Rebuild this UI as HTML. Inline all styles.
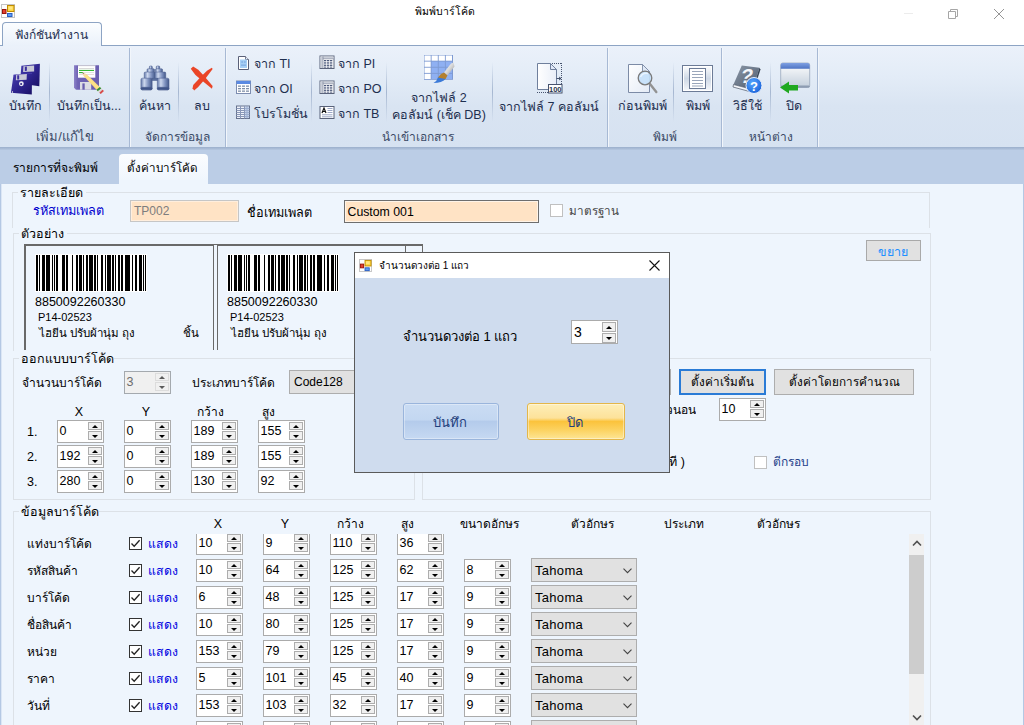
<!DOCTYPE html>
<html><head><meta charset="utf-8"><title>พิมพ์บาร์โค้ด</title>
<style>
html,body{margin:0;padding:0}
body{width:1024px;height:725px;position:relative;overflow:hidden;background:#fff;font-family:"Liberation Sans",sans-serif;font-size:12px;color:#000}
.t{position:absolute;white-space:nowrap;line-height:20px;height:20px}
.abs{position:absolute}
.sp{position:absolute;width:47px;height:23px;box-sizing:border-box;border:1px solid #ababab;background:#fff}
.sp span{position:absolute;left:1.5px;top:0;line-height:21px;font-size:12.5px}
.sp i{position:absolute;left:30px;width:14px;box-sizing:border-box;border:1px solid #adadad;background:#f0f0f0}
.sp i.u{top:1px;height:8px}
.sp i.d{top:10px;height:9px}
.sp i.u:after{content:"";position:absolute;left:3px;top:1.5px;border:3px solid transparent;border-top:0;border-bottom:3px solid #000}
.sp i.d:after{content:"";position:absolute;left:3px;top:2.5px;border:3px solid transparent;border-bottom:0;border-top:3px solid #000}
.sp.big{height:24px}.sp.big span{font-size:14px;line-height:22px;left:2px}.sp.big i.u{top:1px;height:10px}.sp.big i.d{top:12px;height:10px}.sp.big i.u:after{top:2.5px}.sp.big i.d:after{top:3px}
.sp.dis{background:#f0f0f0;border-color:#a4a9ae}
.sp.dis span{color:#6d6d6d}
.sp.dis i{border-color:#dcdcdc;background:#f0f0f0}
.sp.dis i.u:after{border-bottom-color:#5a5a5a}
.sp.dis i.d:after{border-top-color:#5a5a5a}
.cb{position:absolute;width:13px;height:13px;box-sizing:border-box;border:1px solid #333;background:#fff}
.cb svg{position:absolute;left:0;top:0}
.combo{position:absolute;box-sizing:border-box;border:1px solid #adadad;background:#e1e1e1;font-size:13px}
.combo span{position:absolute;left:3px;top:0;letter-spacing:.3px}
.combo .chev{position:absolute;right:4px;top:50%;margin-top:-2.5px}
.gb{position:absolute;box-sizing:border-box;border:1px solid #dce1e7}
.gl{background:#eef5fd;font-size:12.5px;height:14px;line-height:14px;padding-left:2px}
.btn{position:absolute;box-sizing:border-box;border:1px solid #adadad;background:#e1e1e1;text-align:center;font-size:12px}
.vsep{position:absolute;width:1px;top:62px;height:60px;background:linear-gradient(to bottom,rgba(160,178,205,0),rgba(160,178,205,.9) 50%,rgba(160,178,205,0))}
.gsep{position:absolute;width:2px;top:48px;height:99px;background:linear-gradient(to right,#a7b9d4 50%,#f2f6fb 50%)}
.rl{color:#3b4a66}
</style></head><body>

<div class="abs" style="left:0;top:0;width:1024px;height:45px;background:#fff"></div>
<svg class="abs" style="left:1px;top:4px" width="14" height="14" viewBox="0 0 14 14">
<rect x="0.5" y="0.5" width="13" height="13" fill="#fdfdfd" stroke="#c4c4c4"/>
<rect x="6.500" y="1.500" width="6.500" height="6" fill="#ffd742" stroke="#c08c00" stroke-width="1"/>
<rect x="7.500" y="2.500" width="4" height="3" fill="#ffe680"/>
<rect x="1.500" y="5.500" width="3.500" height="4" fill="#e2402e" stroke="#9a1408" stroke-width="1"/>
<rect x="6.500" y="9.500" width="4.500" height="3" fill="#5c9cf2" stroke="#2a5fc4" stroke-width="1"/>
</svg>
<span class="t " style="left:345px;top:0.5px;font-size:10.5px;color:#000;width:200px;text-align:center;">พิมพ์บาร์โค้ด</span>
<svg class="abs" style="left:900px;top:4px" width="124" height="20" viewBox="0 0 124 20">
<path d="M4 9.5 H13" stroke="#ececec" stroke-width="1"/>
<path d="M48.5 7.5 H55.500 V14.500 H48.5 Z M50.5 7.5 V5.5 H57.5 V12.5 H55.5" fill="none" stroke="#a6a6a6" stroke-width="1"/>
<path d="M94 5 L104 15 M104 5 L94 15" stroke="#959595" stroke-width="1"/>
</svg>
<div class="abs" style="left:0;top:45px;width:1024px;height:103px;background:linear-gradient(to bottom,#ebf1fa 0%,#e3ecf7 30%,#d9e4f2 60%,#d6e2f1 100%);border-top:1px solid #8da4c4;border-bottom:1px solid #9fb3cf;box-sizing:border-box"></div>
<div class="abs" style="left:2px;top:22px;width:100px;height:24px;box-sizing:border-box;border:1px solid #8da4c4;border-bottom:0;border-radius:4px 4px 0 0;background:linear-gradient(to bottom,#fbfdff,#eaf1fa)"></div>
<span class="t " style="left:-48.5px;top:24.5px;font-size:12px;color:#1e2f4f;width:200px;text-align:center;">ฟังก์ชันทำงาน</span>
<div class="gsep" style="left:129px"></div>
<div class="gsep" style="left:225px"></div>
<div class="gsep" style="left:607px"></div>
<div class="gsep" style="left:721px"></div>
<div class="gsep" style="left:817px"></div>
<div class="vsep" style="left:49px"></div>
<div class="vsep" style="left:178px"></div>
<div class="vsep" style="left:311px"></div>
<div class="vsep" style="left:386px"></div>
<div class="vsep" style="left:492px"></div>
<div class="vsep" style="left:673px"></div>
<div class="vsep" style="left:770px"></div>
<span class="t " style="left:-35px;top:126.69999999999999px;font-size:13px;color:#3b4a66;width:200px;text-align:center;">เพิ่ม/แก้ไข</span>
<span class="t " style="left:77px;top:126.69999999999999px;font-size:12px;color:#3b4a66;width:200px;text-align:center;">จัดการข้อมูล</span>
<span class="t " style="left:318px;top:126.69999999999999px;font-size:12px;color:#3b4a66;width:200px;text-align:center;">นำเข้าเอกสาร</span>
<span class="t " style="left:565px;top:126.69999999999999px;font-size:12px;color:#3b4a66;width:200px;text-align:center;">พิมพ์</span>
<span class="t " style="left:671px;top:126.69999999999999px;font-size:12px;color:#3b4a66;width:200px;text-align:center;">หน้าต่าง</span>
<span class="t " style="left:-75px;top:95.7px;font-size:12.5px;color:#1e2f4f;width:200px;text-align:center;">บันทึก</span>
<span class="t " style="left:-11px;top:95.7px;font-size:12.5px;color:#1e2f4f;width:200px;text-align:center;">บันทึกเป็น...</span>
<span class="t " style="left:55px;top:95.7px;font-size:12.5px;color:#1e2f4f;width:200px;text-align:center;">ค้นหา</span>
<span class="t " style="left:102px;top:95.7px;font-size:12.5px;color:#1e2f4f;width:200px;text-align:center;">ลบ</span>
<span class="t " style="left:339px;top:87.7px;font-size:12.5px;color:#1e2f4f;width:200px;text-align:center;">จากไฟล์ 2</span>
<span class="t " style="left:339px;top:104.7px;font-size:12.5px;color:#1e2f4f;width:200px;text-align:center;">คอลัมน์ (เช็ค DB)</span>
<span class="t " style="left:449px;top:96.7px;font-size:12.5px;color:#1e2f4f;width:200px;text-align:center;">จากไฟล์ 7 คอลัมน์</span>
<span class="t " style="left:542px;top:95.7px;font-size:12.5px;color:#1e2f4f;width:200px;text-align:center;">ก่อนพิมพ์</span>
<span class="t " style="left:598px;top:95.7px;font-size:12.5px;color:#1e2f4f;width:200px;text-align:center;">พิมพ์</span>
<span class="t " style="left:647px;top:95.7px;font-size:12.5px;color:#1e2f4f;width:200px;text-align:center;">วิธีใช้</span>
<span class="t " style="left:694px;top:95.7px;font-size:12.5px;color:#1e2f4f;width:200px;text-align:center;">ปิด</span>
<span class="t " style="left:254px;top:53.7px;font-size:12.5px;color:#1e2f4f;">จาก TI</span>
<span class="t " style="left:254px;top:78.7px;font-size:12.5px;color:#1e2f4f;">จาก OI</span>
<span class="t " style="left:254px;top:103.7px;font-size:12.5px;color:#1e2f4f;">โปรโมชั่น</span>
<span class="t " style="left:338px;top:53.7px;font-size:12.5px;color:#1e2f4f;">จาก PI</span>
<span class="t " style="left:338px;top:78.7px;font-size:12.5px;color:#1e2f4f;">จาก PO</span>
<span class="t " style="left:338px;top:103.7px;font-size:12.5px;color:#1e2f4f;">จาก TB</span>
<svg class="abs" style="left:9px;top:63px" width="32" height="32" viewBox="0 0 32 32">
<defs><linearGradient id="fl1" x1="0" y1="0" x2="1" y2="1"><stop offset="0" stop-color="#4a40b0"/><stop offset=".5" stop-color="#2f2590"/><stop offset="1" stop-color="#1a1166"/></linearGradient></defs>
<polygon points="12.37,2.82 30.90,0.79 30.32,23.37 10.92,20.48" fill="url(#fl1)"/>
<polygon points="14.40,3.22 25.11,2.53 25.11,8.61 14.11,9.01" fill="#c9c9d6"/>
<polygon points="15.85,3.69 17.87,3.57 17.87,7.85 15.85,7.97" fill="#3a2f9e"/>
<polygon points="4.55,11.68 23.08,9.94 22.79,31.60 1.95,29.86" fill="url(#fl1)"/>
<polygon points="4.55,11.68 23.08,9.94 23.08,10.75 4.55,12.49" fill="#5a50c0" opacity=".6"/>
<polygon points="7.16,11.79 17.87,10.92 17.58,16.71 6.87,17.29" fill="#c9c9d6"/>
<polygon points="8.20,12.37 10.17,12.26 10.17,16.42 8.20,16.54" fill="#3a2f9e"/>
<circle cx="12.37" cy="20.77" r="2.4" fill="#e9e9f2"/>
<circle cx="12.14" cy="20.94" r="1" fill="#2a2080"/>
<rect x="3.11" y="28.01" width=".8" height="2" fill="#d0d0e0"/>
</svg>
<svg class="abs" style="left:72px;top:63px" width="32" height="32" viewBox="0 0 32 32">
<defs><linearGradient id="sv1" x1="0" y1="0" x2="1" y2="0"><stop offset="0" stop-color="#8c82c8"/><stop offset=".15" stop-color="#6f63b4"/><stop offset="1" stop-color="#6a5eb0"/></linearGradient>
<linearGradient id="pc1" x1="0" y1="1" x2="1" y2="0"><stop offset="0" stop-color="#e8b030"/><stop offset=".5" stop-color="#fde48a"/><stop offset="1" stop-color="#e0a020"/></linearGradient></defs>
<path d="M2 2.200 H27 V26.700 H4 L2 24.700 Z" fill="url(#sv1)"/>
<rect x="6" y="2.300" width="17.300" height="12.400" fill="#fff"/>
<rect x="6" y="2.300" width="17.300" height=".8" fill="#b9b9c6"/>
<rect x="7" y="5" width="15" height=".7" fill="#c9c9c9"/>
<rect x="7" y="6.900" width="15" height="1" fill="#1fb01f"/>
<rect x="7" y="9.100" width="4" height="1" fill="#1fb01f"/>
<rect x="11" y="9.200" width="11" height=".6" fill="#d0d0d0"/>
<rect x="7" y="11.200" width="15" height=".6" fill="#d8c8c8"/>
<rect x="8" y="19" width="11.200" height="7.700" fill="#dcdce4"/>
<rect x="10.400" y="20.400" width="2.300" height="6.300" fill="#6a5eb0"/>
<polygon points="10.41,9.36 15.16,11.79 29.35,25.40 25.87,28.29 11.69,12.95" fill="url(#pc1)"/>
<polygon points="10.41,9.36 15.16,11.79 11.69,12.95" fill="#f3d9b0"/>
<polygon points="10.41,9.36 11.98,10.17 10.99,10.63" fill="#333"/>
<polygon points="27.90,23.95 29.35,25.40 25.87,28.29 24.43,26.73" fill="#2e8b3e"/>
<polygon points="29.35,25.40 31.95,28.01 28.77,30.90 25.87,28.29" fill="#d9d9d9"/>
<polygon points="30.51,26.73 31.95,28.01 28.77,30.90 27.32,29.63" fill="#d84a4a"/>
</svg>
<svg class="abs" style="left:139px;top:63px" width="32" height="32" viewBox="0 0 32 32">
<defs><linearGradient id="bn" x1="0" y1="0" x2="1" y2="0"><stop offset="0" stop-color="#6379aa"/><stop offset=".3" stop-color="#cdd8ee"/><stop offset=".65" stop-color="#8093c0"/><stop offset="1" stop-color="#435889"/></linearGradient></defs>
<rect x="10.34" y="2.97" width="3.00" height="3.28" rx="1" fill="url(#bn)" stroke="#4a5d8c" stroke-width=".5"/><rect x="17.19" y="2.97" width="3.56" height="3.28" rx="1" fill="url(#bn)" stroke="#4a5d8c" stroke-width=".5"/>
<rect x="8.00" y="5.78" width="7.50" height="3.75" rx="1" fill="url(#bn)" stroke="#4a5d8c" stroke-width=".5"/><rect x="16.44" y="5.78" width="7.12" height="3.75" rx="1" fill="url(#bn)" stroke="#4a5d8c" stroke-width=".5"/>
<rect x="5.19" y="9.06" width="11.06" height="7.03" rx="1" fill="url(#bn)" stroke="#4a5d8c" stroke-width=".5"/><rect x="15.87" y="9.06" width="10.87" height="7.03" rx="1" fill="url(#bn)" stroke="#4a5d8c" stroke-width=".5"/>
<rect x="13.16" y="15.16" width="5.62" height="2.34" rx="0" fill="#5a6f9e" stroke="#4a5d8c" stroke-width=".5"/>
<rect x="1.91" y="15.16" width="11.25" height="11.72" rx="1.5" fill="url(#bn)" stroke="#4a5d8c" stroke-width=".5"/><rect x="18.31" y="15.16" width="11.72" height="11.72" rx="1.5" fill="url(#bn)" stroke="#4a5d8c" stroke-width=".5"/>
<rect x="1.91" y="24.25" width="11.25" height="2.62" rx="1.5" fill="#3f5488" stroke="#4a5d8c" stroke-width=".5"/><rect x="18.31" y="24.25" width="11.72" height="2.62" rx="1.5" fill="#3f5488" stroke="#4a5d8c" stroke-width=".5"/>
</svg>
<svg class="abs" style="left:186px;top:63px" width="32" height="32" viewBox="0 0 32 32">
<polygon points="4.78,5.69 7.12,3.44 12.28,6.81 18.37,13.19 26.62,23.12 25.97,25.66 16.50,17.97 9.47,11.97" fill="#ea4527"/>
<polygon points="25.87,4.75 26.62,6.06 19.69,15.16 12.19,24.06 8.15,27.53 6.56,25.19 7.22,21.91 15.09,13.47 21.00,7.84" fill="#ea4527"/>
</svg>
<svg class="abs" style="left:236px;top:55px" width="16" height="16" viewBox="0 0 16 16">
<path d="M2.500 1.500 H9.500 L12.500 4.500 V14.500 H2.500 Z" fill="#fff" stroke="#5a6078" stroke-width="1"/>
<path d="M9.500 1.500 V4.500 H12.500" fill="#e8eef8" stroke="#5a6078" stroke-width=".8"/>
<rect x="4" y="4.500" width="7" height="8.500" fill="#a6cff5"/>
<rect x="5" y="9.700" width="5" height=".8" fill="#6a9ad8"/>
<path d="M5.300 6 L7 8 M7 6 L5.300 8 M8 6 L9.700 8 M9.700 6 L8 8" stroke="#7aa8e0" stroke-width=".6"/>
</svg>
<svg class="abs" style="left:236px;top:80px" width="16" height="16" viewBox="0 0 16 16">
<rect x="0.500" y="1" width="14" height="12.500" fill="#fff" stroke="#7d8db0" stroke-width="1"/>
<rect x="0.500" y="1" width="14" height="3" fill="#5b8ae2"/>
<g fill="#7f8fa8"><rect x="2" y="5.500" width="3" height="1.300"/><rect x="6" y="5.500" width="3" height="1.300"/><rect x="10" y="5.500" width="3" height="1.300"/>
<rect x="2" y="8" width="3" height="1.300"/><rect x="6" y="8" width="3" height="1.300"/><rect x="10" y="8" width="3" height="1.300"/>
<rect x="2" y="10.500" width="3" height="1.300"/><rect x="6" y="10.500" width="3" height="1.300"/><rect x="10" y="10.500" width="3" height="1.300"/></g>
</svg>
<svg class="abs" style="left:236px;top:105px" width="16" height="16" viewBox="0 0 16 16">
<rect x="0.500" y="1" width="13" height="12.500" fill="#eef2fa" stroke="#66728e" stroke-width="1"/>
<path d="M4.500 1 V13.500 M8.500 1 V13.500 M11 1 V13.500 M0.500 3.500 H13.500 M0.500 5.500 H13.500 M0.500 7.500 H13.500 M0.500 9.500 H13.500 M0.500 11.500 H13.500" stroke="#8a98b8" stroke-width="1"/>
<rect x="9" y="1.500" width="4" height="11.500" fill="#a9bde0" opacity=".6"/>
</svg>
<svg class="abs" style="left:319px;top:55px" width="16" height="16" viewBox="0 0 16 16">
<rect x="1" y="1" width="14" height="12.500" fill="#fff" stroke="#59627a" stroke-width="1"/>
<rect x="1.500" y="1.500" width="13" height="2" fill="#c9ced8"/>
<rect x="1.500" y="1.500" width="2.300" height="11.500" fill="#c9ced8"/>
<path d="M4 3.800 H14.500 M4 1.500 V13.500" stroke="#7a8398" stroke-width=".7"/>
<g fill="#4d5a7c"><rect x="5" y="5" width="2.300" height="1.300"/><rect x="8" y="5" width="2.300" height="1.300"/><rect x="11" y="5" width="2.300" height="1.300"/>
<rect x="5" y="7.300" width="2.300" height="1.300"/><rect x="8" y="7.300" width="2.300" height="1.300"/><rect x="11" y="7.300" width="2.300" height="1.300"/>
<rect x="5" y="9.600" width="2.300" height="1.300"/><rect x="8" y="9.600" width="2.300" height="1.300"/><rect x="11" y="9.600" width="2.300" height="1.300"/>
<rect x="5" y="11.600" width="2.300" height="1"/><rect x="8" y="11.600" width="2.300" height="1"/><rect x="11" y="11.600" width="2.300" height="1"/></g>
</svg>
<svg class="abs" style="left:319px;top:80px" width="16" height="16" viewBox="0 0 16 16">
<rect x="1" y="1" width="14" height="12.500" fill="#fff" stroke="#59627a" stroke-width="1"/>
<rect x="1.500" y="1.500" width="13" height="2" fill="#c9ced8"/>
<rect x="1.500" y="1.500" width="2.300" height="11.500" fill="#c9ced8"/>
<path d="M4 3.800 H14.500 M4 1.500 V13.500" stroke="#7a8398" stroke-width=".7"/>
<g fill="#4d5a7c"><rect x="5" y="5" width="2.300" height="1.300"/><rect x="8" y="5" width="2.300" height="1.300"/><rect x="11" y="5" width="2.300" height="1.300"/>
<rect x="5" y="7.300" width="2.300" height="1.300"/><rect x="8" y="7.300" width="2.300" height="1.300"/><rect x="11" y="7.300" width="2.300" height="1.300"/>
<rect x="5" y="9.600" width="2.300" height="1.300"/><rect x="8" y="9.600" width="2.300" height="1.300"/><rect x="11" y="9.600" width="2.300" height="1.300"/>
<rect x="5" y="11.600" width="2.300" height="1"/><rect x="8" y="11.600" width="2.300" height="1"/><rect x="11" y="11.600" width="2.300" height="1"/></g>
</svg>
<svg class="abs" style="left:319px;top:105px" width="16" height="16" viewBox="0 0 16 16">
<rect x="1" y="1.500" width="14" height="12" fill="#fff" stroke="#59627a" stroke-width="1"/>
<path d="M3 8 L5 3 L7 8 M3.700 6.500 H6.300" fill="none" stroke="#111" stroke-width="1.200"/>
<path d="M8.500 3.500 H13.500 M8.500 5.500 H13.500 M8.500 7.500 H13.500 M3 9.800 H13.500 M3 11.800 H13.500" stroke="#8f9cc0" stroke-width=".9"/>
</svg>
<svg class="abs" style="left:423px;top:53px" width="34" height="32" viewBox="0 0 34 32">
<defs><linearGradient id="bh" x1="0" y1="0" x2="1" y2="1"><stop offset="0" stop-color="#fff"/><stop offset=".5" stop-color="#d8d8d8"/><stop offset="1" stop-color="#8a8a8a"/></linearGradient></defs>
<rect x="1" y="2" width="29" height="24.800" fill="#7d9ad2"/>
<rect x="1.5" y="2.5" width="6.200" height="5.200" fill="#fff"/><rect x="8.6" y="2.5" width="6.200" height="5.200" fill="#fff"/><rect x="15.7" y="2.5" width="6.200" height="5.200" fill="#fff"/><rect x="22.8" y="2.5" width="6.200" height="5.200" fill="#fff"/><rect x="1.5" y="8.6" width="6.200" height="5.200" fill="#fff"/><rect x="8.6" y="8.6" width="6.200" height="5.200" fill="#8fb0f2"/><rect x="15.7" y="8.6" width="6.200" height="5.200" fill="#8fb0f2"/><rect x="22.8" y="8.6" width="6.200" height="5.200" fill="#8fb0f2"/><rect x="1.5" y="14.7" width="6.200" height="5.200" fill="#fff"/><rect x="8.6" y="14.7" width="6.200" height="5.200" fill="#8fb0f2"/><rect x="15.7" y="14.7" width="6.200" height="5.200" fill="#8fb0f2"/><rect x="22.8" y="14.7" width="6.200" height="5.200" fill="#8fb0f2"/><rect x="1.5" y="20.8" width="6.200" height="5.200" fill="#fff"/><rect x="8.6" y="20.8" width="6.200" height="5.200" fill="#8fb0f2"/><rect x="15.7" y="20.8" width="6.200" height="5.200" fill="#8fb0f2"/><rect x="22.8" y="20.8" width="6.200" height="5.200" fill="#8fb0f2"/>
<polygon points="30.500,9.500 31.500,13.500 24.500,22.500 21,19.500 28,10.500" fill="url(#bh)"/>
<polygon points="21,19.500 24.500,22.500 22.500,26 17,28 15,24.500 18,21" fill="#b4802e"/>
<path d="M15 24.500 L22.500 26 Q19 30 10.500 30 Q14 28 15 24.500 Z" fill="#3b7ad8"/>
</svg>
<svg class="abs" style="left:534px;top:61px" width="32" height="34" viewBox="0 0 32 34">
<defs><linearGradient id="pg" x1="0" y1="0" x2="1" y2="0"><stop offset="0" stop-color="#ffffff"/><stop offset="1" stop-color="#e9eef8"/></linearGradient></defs>
<path d="M3.500 2.500 H16.500 L22.500 8.500 V28.500 H3.500 Z" fill="url(#pg)" stroke="#6f7f9c" stroke-width="1"/>
<path d="M16.500 2.500 V8.500 H22.500 Z" fill="#dfe8f8" stroke="#6f7f9c" stroke-width="1"/>
<path d="M18 2.500 H28" stroke="#47536e" stroke-width="1" stroke-dasharray="1 1"/>
<path d="M27.500 2 V23" stroke="#47536e" stroke-width="1" stroke-dasharray="1 1"/>
<path d="M3 31.500 H14" stroke="#47536e" stroke-width="1" stroke-dasharray="1 1"/>
<path d="M22.500 17.500 H27 M25 16 L27 17.500 L25 19" stroke="#47536e" stroke-width="1" fill="none"/>
<rect x="14.500" y="23.500" width="13.500" height="8.500" fill="#fff" stroke="#47536e" stroke-width="1"/>
<text x="21.300" y="30.600" font-family="Liberation Sans" font-weight="bold" font-size="7.500" text-anchor="middle" fill="#2e3850">100</text>
</svg>
<svg class="abs" style="left:626px;top:62px" width="34" height="34" viewBox="0 0 34 34">
<defs><linearGradient id="pv" x1="0" y1="0" x2="1" y2="1"><stop offset="0" stop-color="#ffffff"/><stop offset="1" stop-color="#e4ebf6"/></linearGradient></defs>
<path d="M2.500 2.500 H16.500 L23.500 9.500 V30.500 H2.500 Z" fill="url(#pv)" stroke="#7c8ba6" stroke-width="1"/>
<path d="M16.500 2.500 V9.500 H23.500 Z" fill="#dfe8f6" stroke="#7c8ba6" stroke-width=".9"/>
<path d="M24 22 L30.300 30" stroke="#929292" stroke-width="2.400" stroke-linecap="round"/>
<circle cx="19" cy="16" r="6.800" fill="#c4e0f9" fill-opacity=".9" stroke="#7a7a7a" stroke-width="1.300"/>
<path d="M14.500 15 Q17 10.500 22 11.500" stroke="#eaf5ff" stroke-width="1.500" fill="none"/>
</svg>
<svg class="abs" style="left:681px;top:64px" width="34" height="30" viewBox="0 0 34 30">
<defs><linearGradient id="pr" x1="0" y1="0" x2="0" y2="1"><stop offset="0" stop-color="#ffffff"/><stop offset=".5" stop-color="#cfd9e6"/><stop offset="1" stop-color="#f7f9fc"/></linearGradient></defs>
<rect x="1.500" y="1.500" width="30" height="26" fill="url(#pr)" stroke="#6c7b96" stroke-width="1"/>
<rect x="2.500" y="2.500" width="28" height="24" fill="none" stroke="#fff" stroke-width="1"/>
<rect x="8.500" y="4.500" width="16" height="20" fill="#fff" stroke="#6c7b96" stroke-width="1"/>
<path d="M11 7.500 H22 M11 10.500 H22 M11 13.500 H22 M11 16.500 H22 M11 19.500 H22 M11 22 H22" stroke="#9aa6ba" stroke-width="1"/>
</svg>
<svg class="abs" style="left:731px;top:62px" width="34" height="34" viewBox="0 0 34 34">
<defs><linearGradient id="bk" x1="0" y1="0" x2="1" y2="1"><stop offset="0" stop-color="#8c98a8"/><stop offset="1" stop-color="#4d5a6c"/></linearGradient>
<radialGradient id="hb" cx=".4" cy=".35" r=".7"><stop offset="0" stop-color="#58a8ff"/><stop offset="1" stop-color="#1860d8"/></radialGradient></defs>
<polygon points="10.800,3.400 28.400,5.700 21.500,27.500 2.500,22.500" fill="url(#bk)"/>
<polygon points="2.500,22.500 21.500,27.500 21,30.200 2,25" fill="#f4f6fa" stroke="#4a5566" stroke-width=".7"/>
<polygon points="28.400,5.700 29.500,7.500 22.200,30 21.500,27.500" fill="#3a4656"/>
<text x="19.500" y="21.500" font-family="Liberation Sans" font-weight="bold" font-size="20" fill="#f4f6fa" text-anchor="middle" transform="skewX(-14)" >?</text>
<circle cx="23" cy="23.500" r="8" fill="url(#hb)" stroke="#e8f0fc" stroke-width="1"/>
<text x="23" y="28.500" font-family="Liberation Sans" font-weight="bold" font-size="13" fill="#fff" text-anchor="middle">?</text>
</svg>
<svg class="abs" style="left:779px;top:62px" width="34" height="34" viewBox="0 0 34 34">
<defs><linearGradient id="cw" x1="0" y1="0" x2="0" y2="1"><stop offset="0" stop-color="#ffffff"/><stop offset="1" stop-color="#c2cedb"/></linearGradient>
<linearGradient id="ct" x1="0" y1="0" x2="0" y2="1"><stop offset="0" stop-color="#7fa0e2"/><stop offset="1" stop-color="#4e74c4"/></linearGradient></defs>
<rect x="1.700" y="1" width="29" height="24.500" rx="2" fill="url(#cw)" stroke="#9aa8bc" stroke-width=".8"/>
<path d="M1.700 6.700 V3 Q1.700 1 3.700 1 H28.700 Q30.700 1 30.700 3 V6.700 Z" fill="url(#ct)"/>
<rect x="1.700" y="23.500" width="29" height="2" rx="1" fill="#8090a8" opacity=".8"/>
<polygon points="1,25.500 10,19.500 10,23 19,23 19,28.500 10,28.500 10,31.500" fill="#1fa81f"/>
</svg>
<div class="abs" style="left:0;top:148px;width:1024px;height:36px;background:#bbcde6"></div>
<div class="abs" style="left:0;top:148px;width:1024px;height:2px;background:linear-gradient(to bottom,#a3b6d2,#b6c8e1)"></div>
<div class="abs" style="left:119px;top:154px;width:89px;height:31px;border-radius:4px 4px 0 0;background:linear-gradient(to bottom,#fbfdff,#eef5fd)"></div>
<span class="t " style="left:13px;top:158px;font-size:12px;color:#000;">รายการที่จะพิมพ์</span>
<span class="t " style="left:126.5px;top:158px;font-size:11.6px;color:#000;">ตั้งค่าบาร์โค้ด</span>
<div class="abs" style="left:0;top:184px;width:1024px;height:541px;background:#eef5fd"></div>
<div class="abs" style="left:0;top:184px;width:2px;height:541px;background:linear-gradient(to right,#b4c8e4 50%,#dbe6f5 50%)"></div>
<div class="abs" style="left:119px;top:180px;width:89px;height:6px;background:#eef5fd"></div>
<div class="abs" style="left:1023px;top:184px;width:1px;height:541px;background:#b4c8e4"></div>
<div class="gb" style="left:12px;top:192px;width:918px;height:36px;border-bottom:0;"></div>
<span class="t gl" style="left:18px;top:185.5px;width:66px">รายละเอียด</span>
<span class="t " style="left:33px;top:201px;font-size:12.7px;color:#0000cd;">รหัสเทมเพลต</span>
<div class="abs" style="left:130px;top:200px;width:109px;height:22px;box-sizing:border-box;border:1px solid #c6c6c6;background:#ffe3c5;box-shadow:inset 0 0 0 1px #ffeedd"></div>
<span class="t " style="left:134px;top:201px;font-size:12px;color:#7d7d7d;">TP002</span>
<span class="t " style="left:247px;top:202.5px;font-size:12.7px;color:#000;">ชื่อเทมเพลต</span>
<div class="abs" style="left:344px;top:200px;width:195px;height:23px;box-sizing:border-box;border:1px solid #6e6e6e;background:#ffe3c5;box-shadow:inset 0 0 0 1px #fff4e8"></div>
<span class="t " style="left:347.5px;top:201.5px;font-size:12.3px;color:#000;">Custom 001</span>
<div class="cb" style="left:550px;top:204px;border-color:#c0c0c0"></div>
<span class="t " style="left:569px;top:201px;font-size:11.7px;color:#444;">มาตรฐาน</span>
<div class="gb" style="left:13px;top:233px;width:918px;height:118px;border-bottom:0;"></div>
<span class="t gl" style="left:19px;top:226.5px;width:46px">ตัวอย่าง</span>
<div class="btn" style="left:866px;top:240px;width:55px;height:21px;line-height:23px;color:#1e8fff;background:#e1e1e1;border-color:#a9a9a9;font-size:12.5px;text-indent:-2px">ขยาย</div>
<div class="abs" style="left:24px;top:244px;width:399px;height:106px;box-sizing:border-box;border:1px solid #696969;border-bottom:0;overflow:hidden">
<div class="abs" style="left:280px;top:0;width:130px;height:92px;box-sizing:border-box;border:1px solid #696969;"></div>
<div class="abs" style="left:0;top:0;width:189px;height:155px;box-sizing:border-box;border:1px solid #696969;background:#eef5fd"></div>
<svg class="abs" style="left:10px;top:9px" width="112" height="38" viewBox="0 0 112 38" shape-rendering="crispEdges" fill="#000"><rect x="0" y="0" width="112" height="38" fill="#fff"/><rect x="1" y="1" width="2" height="36"/><rect x="4" y="1" width="1" height="36"/><rect x="7" y="1" width="3" height="36"/><rect x="11" y="1" width="4" height="36"/><rect x="17" y="1" width="1" height="36"/><rect x="19" y="1" width="1" height="36"/><rect x="21" y="1" width="2" height="36"/><rect x="27" y="1" width="3" height="36"/><rect x="31" y="1" width="2" height="36"/><rect x="37" y="1" width="1" height="36"/><rect x="41" y="1" width="2" height="36"/><rect x="44" y="1" width="3" height="36"/><rect x="48" y="1" width="1" height="36"/><rect x="51" y="1" width="2" height="36"/><rect x="54" y="1" width="4" height="36"/><rect x="59" y="1" width="2" height="36"/><rect x="62" y="1" width="1" height="36"/><rect x="66" y="1" width="2" height="36"/><rect x="70" y="1" width="1" height="36"/><rect x="72" y="1" width="4" height="36"/><rect x="77" y="1" width="2" height="36"/><rect x="80" y="1" width="1" height="36"/><rect x="83" y="1" width="2" height="36"/><rect x="86" y="1" width="2" height="36"/><rect x="90" y="1" width="5" height="36"/><rect x="97" y="1" width="1" height="36"/><rect x="100" y="1" width="2" height="36"/><rect x="104" y="1" width="3" height="36"/><rect x="108" y="1" width="1" height="36"/><rect x="110" y="1" width="1" height="36"/></svg>
<span class="t" style="left:10px;top:47px;font-size:12.5px">8850092260330</span>
<span class="t" style="left:13px;top:62px;font-size:11px">P14-02523</span>
<span class="t" style="left:14px;top:78px;font-size:11.5px">ไฮยีน ปรับผ้านุ่ม ถุง</span>
<span class="t" style="left:158px;top:78px;font-size:11.5px">ชิ้น</span>
<div class="abs" style="left:192px;top:0;width:189px;height:155px;box-sizing:border-box;border:1px solid #696969;background:#eef5fd"></div>
<svg class="abs" style="left:202px;top:9px" width="112" height="38" viewBox="0 0 112 38" shape-rendering="crispEdges" fill="#000"><rect x="0" y="0" width="112" height="38" fill="#fff"/><rect x="1" y="1" width="2" height="36"/><rect x="4" y="1" width="1" height="36"/><rect x="7" y="1" width="3" height="36"/><rect x="11" y="1" width="4" height="36"/><rect x="17" y="1" width="1" height="36"/><rect x="19" y="1" width="1" height="36"/><rect x="21" y="1" width="2" height="36"/><rect x="27" y="1" width="3" height="36"/><rect x="31" y="1" width="2" height="36"/><rect x="37" y="1" width="1" height="36"/><rect x="41" y="1" width="2" height="36"/><rect x="44" y="1" width="3" height="36"/><rect x="48" y="1" width="1" height="36"/><rect x="51" y="1" width="2" height="36"/><rect x="54" y="1" width="4" height="36"/><rect x="59" y="1" width="2" height="36"/><rect x="62" y="1" width="1" height="36"/><rect x="66" y="1" width="2" height="36"/><rect x="70" y="1" width="1" height="36"/><rect x="72" y="1" width="4" height="36"/><rect x="77" y="1" width="2" height="36"/><rect x="80" y="1" width="1" height="36"/><rect x="83" y="1" width="2" height="36"/><rect x="86" y="1" width="2" height="36"/><rect x="90" y="1" width="5" height="36"/><rect x="97" y="1" width="1" height="36"/><rect x="100" y="1" width="2" height="36"/><rect x="104" y="1" width="3" height="36"/><rect x="108" y="1" width="1" height="36"/><rect x="110" y="1" width="1" height="36"/></svg>
<span class="t" style="left:202px;top:47px;font-size:12.5px">8850092260330</span>
<span class="t" style="left:205px;top:62px;font-size:11px">P14-02523</span>
<span class="t" style="left:206px;top:78px;font-size:11.5px">ไฮยีน ปรับผ้านุ่ม ถุง</span>
</div>
<div class="gb" style="left:13px;top:358px;width:402px;height:142px;"></div>
<span class="t gl" style="left:19px;top:351.5px;width:93px">ออกแบบบาร์โค้ด</span>
<span class="t " style="left:22px;top:373px;font-size:12px;color:#000;">จำนวนบาร์โค้ด</span>
<div class="sp dis" style="left:124px;top:371px"><span>3</span><i class="u"></i><i class="d"></i></div>
<span class="t " style="left:191.5px;top:373px;font-size:12px;color:#000;">ประเภทบาร์โค้ด</span>
<div class="combo" style="left:289px;top:370px;width:120px;height:24px;line-height:23px"><span style="font-size:12px;letter-spacing:0;left:4px">Code128</span><svg class="chev" width="9" height="6" viewBox="0 0 9 6"><path d="M0.5 0.7 L4.5 4.7 L8.5 0.7" fill="none" stroke="#444" stroke-width="1.1"/></svg></div>
<span class="t " style="left:-21px;top:402px;font-size:12.5px;color:#000;width:200px;text-align:center;">X</span>
<span class="t " style="left:46px;top:402px;font-size:12.5px;color:#000;width:200px;text-align:center;">Y</span>
<span class="t " style="left:197px;top:402px;font-size:12px;color:#000;">กว้าง</span>
<span class="t " style="left:262px;top:402px;font-size:12px;color:#000;">สูง</span>
<span class="t " style="left:27px;top:422px;font-size:12.5px;color:#000;">1.</span>
<div class="sp" style="left:57px;top:420px"><span>0</span><i class="u"></i><i class="d"></i></div>
<div class="sp" style="left:124px;top:420px"><span>0</span><i class="u"></i><i class="d"></i></div>
<div class="sp" style="left:191px;top:420px"><span>189</span><i class="u"></i><i class="d"></i></div>
<div class="sp" style="left:258px;top:420px"><span>155</span><i class="u"></i><i class="d"></i></div>
<span class="t " style="left:27px;top:447px;font-size:12.5px;color:#000;">2.</span>
<div class="sp" style="left:57px;top:445px"><span>192</span><i class="u"></i><i class="d"></i></div>
<div class="sp" style="left:124px;top:445px"><span>0</span><i class="u"></i><i class="d"></i></div>
<div class="sp" style="left:191px;top:445px"><span>189</span><i class="u"></i><i class="d"></i></div>
<div class="sp" style="left:258px;top:445px"><span>155</span><i class="u"></i><i class="d"></i></div>
<span class="t " style="left:27px;top:472px;font-size:12.5px;color:#000;">3.</span>
<div class="sp" style="left:57px;top:470px"><span>280</span><i class="u"></i><i class="d"></i></div>
<div class="sp" style="left:124px;top:470px"><span>0</span><i class="u"></i><i class="d"></i></div>
<div class="sp" style="left:191px;top:470px"><span>130</span><i class="u"></i><i class="d"></i></div>
<div class="sp" style="left:258px;top:470px"><span>92</span><i class="u"></i><i class="d"></i></div>
<div class="gb" style="left:422px;top:358px;width:509px;height:142px;"></div>
<div class="btn" style="left:600px;top:369px;width:71px;height:26px"></div>
<div class="btn" style="left:679px;top:369px;width:87px;height:26px;line-height:21px;font-size:11.7px;border:2px solid #2a7bd6">ตั้งค่าเริ่มต้น</div>
<div class="btn" style="left:774px;top:369px;width:140px;height:26px;line-height:23px;font-size:11.7px">ตั้งค่าโดยการคำนวณ</div>
<span class="t " style="left:640px;top:400px;font-size:12px;color:#000;width:56px;text-align:right;overflow:hidden;direction:rtl;">ระยะห่างแนวนอน</span>
<div class="sp" style="left:719px;top:398px"><span>10</span><i class="u"></i><i class="d"></i></div>
<span class="t " style="left:600px;top:452px;font-size:12.5px;color:#000;width:85px;text-align:right;">( ต่อ 1 วินาที )</span>
<div class="cb" style="left:754px;top:456px;border-color:#c0c0c0"></div>
<span class="t " style="left:773px;top:452px;font-size:12px;color:#1f3f8a;">ตีกรอบ</span>
<div class="gb" style="left:13px;top:511px;width:918px;height:230px;"></div>
<span class="t gl" style="left:19px;top:504.5px;width:78px">ข้อมูลบาร์โค้ด</span>
<span class="t " style="left:118px;top:514px;font-size:12.5px;color:#000;width:200px;text-align:center;">X</span>
<span class="t " style="left:185px;top:514px;font-size:12.5px;color:#000;width:200px;text-align:center;">Y</span>
<span class="t " style="left:337px;top:514px;font-size:12px;color:#000;">กว้าง</span>
<span class="t " style="left:401px;top:514px;font-size:12px;color:#000;">สูง</span>
<span class="t " style="left:460px;top:514px;font-size:12px;color:#000;">ขนาดอักษร</span>
<span class="t " style="left:571px;top:514px;font-size:12px;color:#000;">ตัวอักษร</span>
<span class="t " style="left:664px;top:514px;font-size:12px;color:#000;">ประเภท</span>
<span class="t " style="left:757px;top:514px;font-size:12px;color:#000;">ตัวอักษร</span>
<div class="abs" style="left:14px;top:534px;width:912px;height:191px;overflow:hidden">
<span class="t " style="left:13px;top:0px;font-size:12px;color:#000;">แท่งบาร์โค้ด</span>
<div class="cb" style="left:115px;top:3px;border-color:#333"><svg width="11" height="11" viewBox="0 0 11 11"><path d="M1.5 5.5 L4.2 8.3 L9.6 2.3" fill="none" stroke="#222" stroke-width="1.3"/></svg></div>
<span class="t " style="left:134px;top:0px;font-size:12.3px;color:#0000e0;">แสดง</span>
<div class="sp" style="left:182px;top:-2px"><span>10</span><i class="u"></i><i class="d"></i></div>
<div class="sp" style="left:249px;top:-2px"><span>9</span><i class="u"></i><i class="d"></i></div>
<div class="sp" style="left:316px;top:-2px"><span>110</span><i class="u"></i><i class="d"></i></div>
<div class="sp" style="left:383px;top:-2px"><span>36</span><i class="u"></i><i class="d"></i></div>
<span class="t " style="left:13px;top:27px;font-size:12px;color:#000;">รหัสสินค้า</span>
<div class="cb" style="left:115px;top:30px;border-color:#333"><svg width="11" height="11" viewBox="0 0 11 11"><path d="M1.5 5.5 L4.2 8.3 L9.6 2.3" fill="none" stroke="#222" stroke-width="1.3"/></svg></div>
<span class="t " style="left:134px;top:27px;font-size:12.3px;color:#0000e0;">แสดง</span>
<div class="sp" style="left:182px;top:25px"><span>10</span><i class="u"></i><i class="d"></i></div>
<div class="sp" style="left:249px;top:25px"><span>64</span><i class="u"></i><i class="d"></i></div>
<div class="sp" style="left:316px;top:25px"><span>125</span><i class="u"></i><i class="d"></i></div>
<div class="sp" style="left:383px;top:25px"><span>62</span><i class="u"></i><i class="d"></i></div>
<div class="sp" style="left:450px;top:25px"><span>8</span><i class="u"></i><i class="d"></i></div>
<div class="combo" style="left:517px;top:24px;width:106px;height:24px;line-height:23px"><span style="">Tahoma</span><svg class="chev" width="9" height="6" viewBox="0 0 9 6"><path d="M0.5 0.7 L4.5 4.7 L8.5 0.7" fill="none" stroke="#444" stroke-width="1.1"/></svg></div>
<span class="t " style="left:13px;top:54px;font-size:12px;color:#000;">บาร์โค้ด</span>
<div class="cb" style="left:115px;top:57px;border-color:#333"><svg width="11" height="11" viewBox="0 0 11 11"><path d="M1.5 5.5 L4.2 8.3 L9.6 2.3" fill="none" stroke="#222" stroke-width="1.3"/></svg></div>
<span class="t " style="left:134px;top:54px;font-size:12.3px;color:#0000e0;">แสดง</span>
<div class="sp" style="left:182px;top:52px"><span>6</span><i class="u"></i><i class="d"></i></div>
<div class="sp" style="left:249px;top:52px"><span>48</span><i class="u"></i><i class="d"></i></div>
<div class="sp" style="left:316px;top:52px"><span>125</span><i class="u"></i><i class="d"></i></div>
<div class="sp" style="left:383px;top:52px"><span>17</span><i class="u"></i><i class="d"></i></div>
<div class="sp" style="left:450px;top:52px"><span>9</span><i class="u"></i><i class="d"></i></div>
<div class="combo" style="left:517px;top:51px;width:106px;height:24px;line-height:23px"><span style="">Tahoma</span><svg class="chev" width="9" height="6" viewBox="0 0 9 6"><path d="M0.5 0.7 L4.5 4.7 L8.5 0.7" fill="none" stroke="#444" stroke-width="1.1"/></svg></div>
<span class="t " style="left:13px;top:81px;font-size:12px;color:#000;">ชื่อสินค้า</span>
<div class="cb" style="left:115px;top:84px;border-color:#333"><svg width="11" height="11" viewBox="0 0 11 11"><path d="M1.5 5.5 L4.2 8.3 L9.6 2.3" fill="none" stroke="#222" stroke-width="1.3"/></svg></div>
<span class="t " style="left:134px;top:81px;font-size:12.3px;color:#0000e0;">แสดง</span>
<div class="sp" style="left:182px;top:79px"><span>10</span><i class="u"></i><i class="d"></i></div>
<div class="sp" style="left:249px;top:79px"><span>80</span><i class="u"></i><i class="d"></i></div>
<div class="sp" style="left:316px;top:79px"><span>125</span><i class="u"></i><i class="d"></i></div>
<div class="sp" style="left:383px;top:79px"><span>17</span><i class="u"></i><i class="d"></i></div>
<div class="sp" style="left:450px;top:79px"><span>9</span><i class="u"></i><i class="d"></i></div>
<div class="combo" style="left:517px;top:78px;width:106px;height:24px;line-height:23px"><span style="">Tahoma</span><svg class="chev" width="9" height="6" viewBox="0 0 9 6"><path d="M0.5 0.7 L4.5 4.7 L8.5 0.7" fill="none" stroke="#444" stroke-width="1.1"/></svg></div>
<span class="t " style="left:13px;top:108px;font-size:12px;color:#000;">หน่วย</span>
<div class="cb" style="left:115px;top:111px;border-color:#333"><svg width="11" height="11" viewBox="0 0 11 11"><path d="M1.5 5.5 L4.2 8.3 L9.6 2.3" fill="none" stroke="#222" stroke-width="1.3"/></svg></div>
<span class="t " style="left:134px;top:108px;font-size:12.3px;color:#0000e0;">แสดง</span>
<div class="sp" style="left:182px;top:106px"><span>153</span><i class="u"></i><i class="d"></i></div>
<div class="sp" style="left:249px;top:106px"><span>79</span><i class="u"></i><i class="d"></i></div>
<div class="sp" style="left:316px;top:106px"><span>125</span><i class="u"></i><i class="d"></i></div>
<div class="sp" style="left:383px;top:106px"><span>17</span><i class="u"></i><i class="d"></i></div>
<div class="sp" style="left:450px;top:106px"><span>9</span><i class="u"></i><i class="d"></i></div>
<div class="combo" style="left:517px;top:105px;width:106px;height:24px;line-height:23px"><span style="">Tahoma</span><svg class="chev" width="9" height="6" viewBox="0 0 9 6"><path d="M0.5 0.7 L4.5 4.7 L8.5 0.7" fill="none" stroke="#444" stroke-width="1.1"/></svg></div>
<span class="t " style="left:13px;top:135px;font-size:12px;color:#000;">ราคา</span>
<div class="cb" style="left:115px;top:138px;border-color:#333"><svg width="11" height="11" viewBox="0 0 11 11"><path d="M1.5 5.5 L4.2 8.3 L9.6 2.3" fill="none" stroke="#222" stroke-width="1.3"/></svg></div>
<span class="t " style="left:134px;top:135px;font-size:12.3px;color:#0000e0;">แสดง</span>
<div class="sp" style="left:182px;top:133px"><span>5</span><i class="u"></i><i class="d"></i></div>
<div class="sp" style="left:249px;top:133px"><span>101</span><i class="u"></i><i class="d"></i></div>
<div class="sp" style="left:316px;top:133px"><span>45</span><i class="u"></i><i class="d"></i></div>
<div class="sp" style="left:383px;top:133px"><span>40</span><i class="u"></i><i class="d"></i></div>
<div class="sp" style="left:450px;top:133px"><span>9</span><i class="u"></i><i class="d"></i></div>
<div class="combo" style="left:517px;top:132px;width:106px;height:24px;line-height:23px"><span style="">Tahoma</span><svg class="chev" width="9" height="6" viewBox="0 0 9 6"><path d="M0.5 0.7 L4.5 4.7 L8.5 0.7" fill="none" stroke="#444" stroke-width="1.1"/></svg></div>
<span class="t " style="left:13px;top:162px;font-size:12px;color:#000;">วันที่</span>
<div class="cb" style="left:115px;top:165px;border-color:#333"><svg width="11" height="11" viewBox="0 0 11 11"><path d="M1.5 5.5 L4.2 8.3 L9.6 2.3" fill="none" stroke="#222" stroke-width="1.3"/></svg></div>
<span class="t " style="left:134px;top:162px;font-size:12.3px;color:#0000e0;">แสดง</span>
<div class="sp" style="left:182px;top:160px"><span>153</span><i class="u"></i><i class="d"></i></div>
<div class="sp" style="left:249px;top:160px"><span>103</span><i class="u"></i><i class="d"></i></div>
<div class="sp" style="left:316px;top:160px"><span>32</span><i class="u"></i><i class="d"></i></div>
<div class="sp" style="left:383px;top:160px"><span>17</span><i class="u"></i><i class="d"></i></div>
<div class="sp" style="left:450px;top:160px"><span>9</span><i class="u"></i><i class="d"></i></div>
<div class="combo" style="left:517px;top:159px;width:106px;height:24px;line-height:23px"><span style="">Tahoma</span><svg class="chev" width="9" height="6" viewBox="0 0 9 6"><path d="M0.5 0.7 L4.5 4.7 L8.5 0.7" fill="none" stroke="#444" stroke-width="1.1"/></svg></div>
<div class="sp" style="left:182px;top:187px"><span></span><i class="u"></i><i class="d"></i></div>
<div class="sp" style="left:249px;top:187px"><span></span><i class="u"></i><i class="d"></i></div>
<div class="sp" style="left:316px;top:187px"><span></span><i class="u"></i><i class="d"></i></div>
<div class="sp" style="left:383px;top:187px"><span></span><i class="u"></i><i class="d"></i></div>
<div class="sp" style="left:450px;top:187px"><span></span><i class="u"></i><i class="d"></i></div>
<div class="combo" style="left:517px;top:186px;width:106px;height:24px;line-height:23px"><span style=""></span><svg class="chev" width="9" height="6" viewBox="0 0 9 6"><path d="M0.5 0.7 L4.5 4.7 L8.5 0.7" fill="none" stroke="#444" stroke-width="1.1"/></svg></div>
<div class="abs" style="left:895px;top:0;width:15px;height:191px;background:#f0f0f0"></div>
<div class="abs" style="left:895px;top:21px;width:15px;height:119px;background:#cdcdcd"></div>
<svg class="abs" style="left:897.5px;top:6px" width="10" height="7" viewBox="0 0 10 7"><path d="M1 5.5 L5 1.5 L9 5.5" fill="none" stroke="#505050" stroke-width="1.6"/></svg>
<svg class="abs" style="left:897.5px;top:180px" width="10" height="7" viewBox="0 0 10 7"><path d="M1 1.5 L5 5.5 L9 1.5" fill="none" stroke="#505050" stroke-width="1.6"/></svg>
</div>
<div class="abs" style="left:354px;top:252px;width:316px;height:221px;box-sizing:border-box;border:1px solid #5a5a5a;background:#cfdcee">
<div class="abs" style="left:0;top:0;width:314px;height:25px;background:#fff"></div>
<svg class="abs" style="left:4px;top:6px" width="13" height="13" viewBox="0 0 14 14">
<rect x="0.5" y="0.5" width="13" height="13" fill="#fdfdfd" stroke="#c4c4c4"/>
<rect x="6.500" y="1.500" width="6.500" height="6" fill="#ffd742" stroke="#c08c00" stroke-width="1"/>
<rect x="7.500" y="2.500" width="4" height="3" fill="#ffe680"/>
<rect x="1.500" y="5.500" width="3.500" height="4" fill="#e2402e" stroke="#9a1408" stroke-width="1"/>
<rect x="6.500" y="9.500" width="4.500" height="3" fill="#5c9cf2" stroke="#2a5fc4" stroke-width="1"/>
</svg>
<span class="t " style="left:24px;top:3px;font-size:10px;color:#000;">จำนวนดวงต่อ 1 แถว</span>
<svg class="abs" style="left:293px;top:5.5px" width="13" height="13" viewBox="0 0 13 13"><path d="M1.5 1.5 L11.5 11.5 M11.5 1.5 L1.5 11.5" stroke="#111" stroke-width="1.1"/></svg>
<span class="t " style="left:48px;top:74px;font-size:13px;color:#000;">จำนวนดวงต่อ 1 แถว</span>
<div class="sp big" style="left:216px;top:67px"><span>3</span><i class="u"></i><i class="d"></i></div>
<div class="abs" style="left:48px;top:150px;width:96px;height:37px;box-sizing:border-box;border:1px solid #9ab5dc;border-radius:3px;box-shadow:inset 0 0 0 1px rgba(255,255,255,.35);background:linear-gradient(to bottom,#cadcf3 0%,#c3d7f1 45%,#b4cbeb 50%,#c6d9f2 100%);text-align:center;line-height:37px;color:#1e3e7b;font-size:13px;text-indent:-3px">บันทึก</div>
<div class="abs" style="left:172px;top:150px;width:98px;height:37px;box-sizing:border-box;border:1px solid #e3b64a;border-radius:3px;box-shadow:inset 0 0 0 1px rgba(255,255,255,.4);background:linear-gradient(to bottom,#fdeeb8 0%,#fde29a 40%,#fbc33c 50%,#fcd362 75%,#fde595 100%);text-align:center;line-height:37px;color:#1e3e7b;font-size:13px;text-indent:-2px">ปิด</div>
</div>
</body></html>
